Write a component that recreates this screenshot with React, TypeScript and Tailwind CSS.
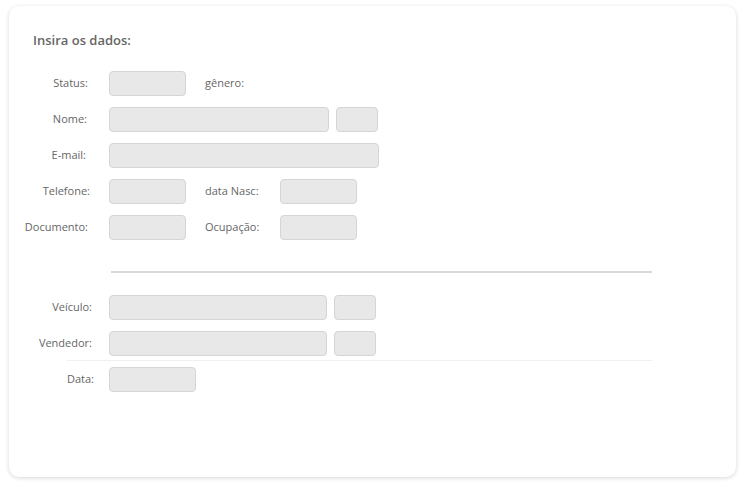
const font = { fontFamily: '"Open Sans", "Noto Sans", sans-serif' };

function Field({ className }: { className: string }) {
  return (
    <div className={`h-[25px] rounded-[4px] border border-[#d5d5d5] bg-[#e8e8e8] ${className}`} />
  );
}

function Label({ text, pad }: { text: string; pad: string }) {
  return (
    <div className={`w-[100px] shrink-0 text-right text-[11px] text-[#666] ${pad}`}>{text}</div>
  );
}

function SideLabel({ text }: { text: string }) {
  return <div className="ml-[19px] w-[75px] shrink-0 text-[11px] text-[#666]">{text}</div>;
}

export default function App() {
  return (
    <div className="min-h-screen bg-white pl-[9px] pt-[6px]" style={font}>
      <div className="flex h-[471px] w-[727px] flex-col rounded-[10px] bg-white shadow-[0_1px_4px_rgba(0,0,0,0.16)]">
        <div className="pl-[24px] pt-[25px] text-[13px] font-semibold leading-[18px] text-[#666]">
          Insira os dados:
        </div>

        {/* dados pessoais */}
        <div className="mt-[22px] flex items-center">
          <Label text="Status:" pad="pr-[21px]" />
          <Field className="w-[77px]" />
          <SideLabel text="gênero:" />
        </div>
        <div className="mt-[11px] flex items-center">
          <Label text="Nome:" pad="pr-[22px]" />
          <Field className="w-[220px]" />
          <Field className="ml-[7px] w-[42px]" />
        </div>
        <div className="mt-[11px] flex items-center">
          <Label text="E-mail:" pad="pr-[23px]" />
          <Field className="w-[270px]" />
        </div>
        <div className="mt-[11px] flex items-center">
          <Label text="Telefone:" pad="pr-[19px]" />
          <Field className="w-[77px]" />
          <SideLabel text="data Nasc:" />
          <Field className="w-[77px]" />
        </div>
        <div className="mt-[11px] flex items-center">
          <Label text="Documento:" pad="pr-[21px]" />
          <Field className="w-[77px]" />
          <SideLabel text="Ocupação:" />
          <Field className="w-[77px]" />
        </div>

        <div className="ml-[102px] mt-[31px] h-[2px] w-[541px] bg-[#d9d9d9]" />

        {/* venda */}
        <div className="mt-[22px] flex items-center">
          <Label text="Veículo:" pad="pr-[17px]" />
          <Field className="w-[218px]" />
          <Field className="ml-[7px] w-[42px]" />
        </div>
        <div className="mt-[11px] flex items-center">
          <Label text="Vendedor:" pad="pr-[17px]" />
          <Field className="w-[218px]" />
          <Field className="ml-[7px] w-[42px]" />
        </div>
        <div className="ml-[58px] mt-[4px] h-px w-[585px] bg-[#f0f0f0]" />
        <div className="mt-[6px] flex items-center">
          <Label text="Data:" pad="pr-[15px]" />
          <Field className="w-[87px]" />
        </div>
      </div>
    </div>
  );
}
